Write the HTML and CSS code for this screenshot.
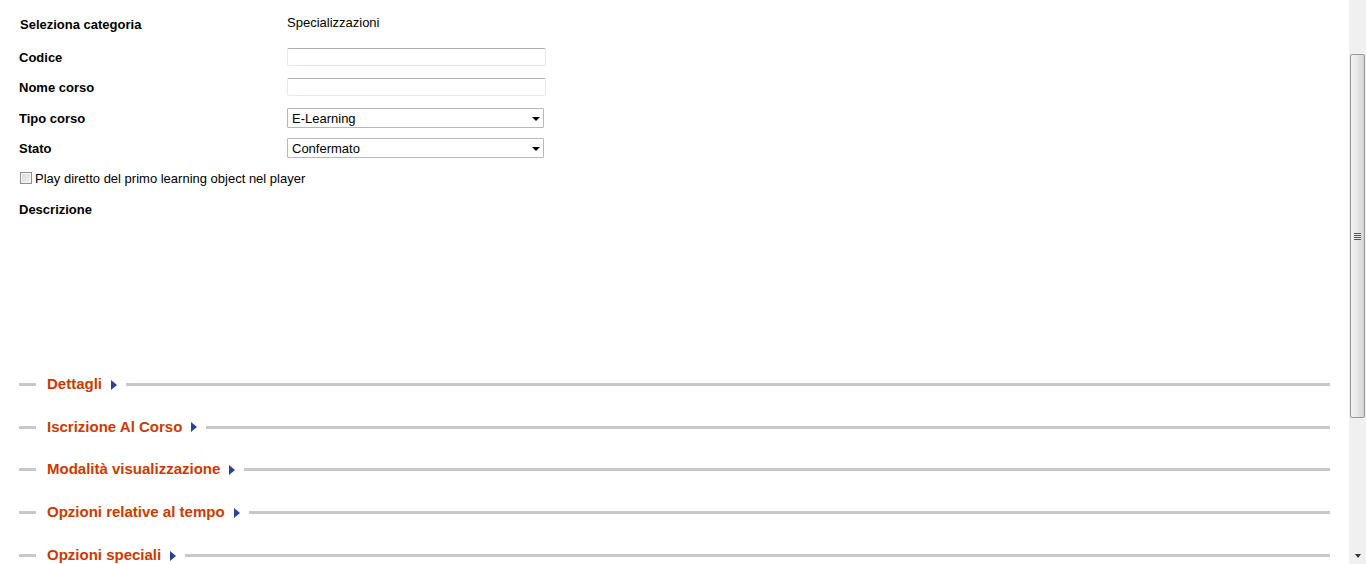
FILE: index.html
```html
<!DOCTYPE html>
<html lang="it">
<head>
<meta charset="utf-8">
<title>Corso</title>
<link rel="stylesheet" href="styles.css">
</head>
<body>
<div class="page">
  <main class="content">
    <div class="form">
      <div class="row row-first">
        <div class="label label-sel">Seleziona categoria</div>
        <div class="value">Specializzazioni</div>
      </div>
      <div class="row">
        <div class="label">Codice</div>
        <div class="field"><span class="input"></span></div>
      </div>
      <div class="row">
        <div class="label">Nome corso</div>
        <div class="field"><span class="input"></span></div>
      </div>
      <div class="row row-tall">
        <div class="label">Tipo corso</div>
        <div class="field"><span class="select"><span class="select-text">E-Learning</span><span class="caret"></span></span></div>
      </div>
      <div class="row">
        <div class="label">Stato</div>
        <div class="field"><span class="select"><span class="select-text">Confermato</span><span class="caret"></span></span></div>
      </div>
      <div class="row row-check">
        <span class="checkbox"></span>
        <span class="check-label">Play diretto del primo learning object nel player</span>
      </div>
      <div class="row row-desc">
        <div class="label">Descrizione</div>
      </div>
      <div class="editor"></div>
    </div>
    <div class="sections">
      <div class="section"><span class="dash"></span><span class="title">Dettagli</span><span class="arrow"></span><span class="rule"></span></div>
      <div class="section"><span class="dash"></span><span class="title">Iscrizione Al Corso</span><span class="arrow"></span><span class="rule"></span></div>
      <div class="section"><span class="dash"></span><span class="title">Modalità visualizzazione</span><span class="arrow"></span><span class="rule"></span></div>
      <div class="section"><span class="dash"></span><span class="title">Opzioni relative al tempo</span><span class="arrow"></span><span class="rule"></span></div>
      <div class="section"><span class="dash"></span><span class="title">Opzioni speciali</span><span class="arrow"></span><span class="rule"></span></div>
    </div>
  </main>
  <aside class="scrollbar">
    <div class="track-top"></div>
    <div class="thumb"><span class="grip"></span></div>
    <div class="track-rest"></div>
    <div class="btn-down"><span class="down-caret"></span></div>
  </aside>
</div>
</body>
</html>
```
FILE: styles.css
```css
html, body {
  margin: 0;
  padding: 0;
  background: #ffffff;
  overflow: hidden;
}
body {
  font-family: Arial, "Liberation Sans", sans-serif;
  font-size: 13px;
  color: #000;
}
.page {
  display: flex;
  width: 1366px;
  height: 564px;
  overflow: hidden;
}
.content {
  width: 1349px;
  flex: none;
  display: flex;
  flex-direction: column;
}
.form {
  padding: 9px 0 0 19px;
  display: flex;
  flex-direction: column;
}
.row {
  display: flex;
  align-items: center;
  height: 30px;
}
.row-first {
  height: 30px;
  margin-bottom: 3px;
}
.row-tall { margin-top: 1px; }
.row-desc { height: 31px; margin-top: 1px; }
.label {
  width: 268px;
  font-weight: bold;
  flex: none;
}
.label-sel { padding-left: 1px; width: 267px; }
.value {
  position: relative;
  top: -2px;
}
.field { display: flex; }
.input {
  display: block;
  width: 257px;
  height: 16px;
  border: 1px solid #e3e9ef;
  border-top-color: #abadb3;
  border-radius: 2px;
  background: #fff;
}
.select {
  display: flex;
  align-items: center;
  height: 18px;
  border: 1px solid #b8b8b8;
  border-radius: 1px;
  background: #fff;
  padding-left: 4px;
  box-sizing: content-box;
  width: 251px;
}
.select-text { flex: 1; }
.caret {
  width: 0;
  height: 0;
  border-left: 4px solid transparent;
  border-right: 4px solid transparent;
  border-top: 4px solid #000;
  margin-right: 3px;
  margin-top: 1px;
}
.row-check { padding-left: 1px; }
.checkbox {
  display: block;
  width: 10px;
  height: 10px;
  border: 1px solid #8f8f8f;
  background: linear-gradient(135deg, #d8d8d8, #f4f4f4);
  box-shadow: inset 0 0 0 1px #f6f6f6;
  margin-right: 3px;
  flex: none;
}
.editor {
  height: 138px;
}
.sections {
  display: flex;
  flex-direction: column;
  padding-left: 19px;
  width: 1311px;
}
.section {
  display: flex;
  align-items: center;
  height: 43px;
  flex: none;
}
.section:nth-child(2) { height: 42px; }
.dash {
  width: 17px;
  height: 3px;
  background: #c8c8c8;
  flex: none;
}
.title {
  margin-left: 11px;
  font-size: 15px;
  font-weight: bold;
  color: #cc3a00;
  flex: none;
  position: relative;
  top: -1px;
}
.arrow {
  width: 0;
  height: 0;
  border-top: 5px solid transparent;
  border-bottom: 5px solid transparent;
  border-left: 6px solid #2a4396;
  margin-left: 9px;
  margin-right: 9px;
  flex: none;
}
.rule {
  flex: 1;
  height: 3px;
  background: #c8c8c8;
}
.scrollbar {
  width: 17px;
  flex: none;
  background: #f0f0f0;
  display: flex;
  flex-direction: column;
  align-items: center;
}
.track-top { height: 54px; flex: none; }
.thumb {
  width: 13px;
  height: 362px;
  flex: none;
  border: 1px solid #979797;
  border-radius: 2px;
  background: linear-gradient(90deg, #f2f2f2 0%, #e8e8e8 45%, #d4d4d4 100%);
  display: flex;
  align-items: center;
  justify-content: center;
  box-sizing: content-box;
}
.grip {
  display: block;
  width: 7px;
  height: 7px;
  background: repeating-linear-gradient(180deg, #555 0 1px, #e8e8e8 1px 2px);
}
.track-rest { flex: 1; }
.btn-down {
  height: 17px;
  width: 17px;
  display: flex;
  align-items: center;
  justify-content: center;
  flex: none;
}
.down-caret {
  width: 0;
  height: 0;
  border-left: 3.5px solid transparent;
  border-right: 3.5px solid transparent;
  border-top: 4px solid #333;
}
```
